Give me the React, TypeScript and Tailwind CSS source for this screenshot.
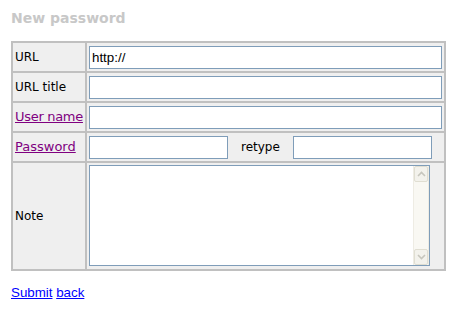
import React from 'react';

const verdana = "font-['DejaVu_Sans','Noto_Sans',sans-serif]";
const arial = "font-['Liberation_Sans',Arial,sans-serif]";

const inputCls =
  "h-[23px] border border-[#7f9db9] bg-white px-[2px] text-[13.33px] text-black outline-none font-['Liberation_Sans',Arial,sans-serif]";

function Chevron({ up }: { up?: boolean }) {
  return (
    <svg width="9" height="6" viewBox="0 0 9 6">
      <path
        d={up ? 'M1 5 L4.5 1.5 L8 5' : 'M1 1 L4.5 4.5 L8 1'}
        stroke="#c7c6bd"
        strokeWidth="1.6"
        fill="none"
      />
    </svg>
  );
}

function ScrollBar() {
  return (
    <div className="flex w-[16px] flex-col bg-[#f9f8f3] border-x border-[#eeece4]">
      <div className="flex h-[16px] items-center justify-center rounded-[2px] border border-[#e0ded2] bg-[#f3f2ec]">
        <Chevron up />
      </div>
      <div className="flex-1" />
      <div className="flex h-[16px] items-center justify-center rounded-[2px] border border-[#e0ded2] bg-[#f3f2ec]">
        <Chevron />
      </div>
    </div>
  );
}

export default function App() {
  return (
    <div className={`min-h-[322px] bg-white pl-[11px] pt-[10px] ${verdana}`}>
      <h1 className="text-[14px] font-bold leading-[16px] text-[#c8c8c8]">New password</h1>

      {/* form table */}
      <div className="mt-[15px] grid w-[435px] grid-cols-[72px_357px] grid-rows-[28px_28px_28px_28px_106px] gap-[2px] bg-[#c0c0c0] p-[2px] text-[12px] text-black">
        <div className="flex items-center bg-[#efefef] pl-[2px]">URL</div>
        <div className="flex items-center bg-[#efefef] px-[2px]">
          <input className={`${inputCls} w-full`} defaultValue="http://" />
        </div>

        <div className="flex items-center bg-[#efefef] pl-[2px]">URL title</div>
        <div className="flex items-center bg-[#efefef] px-[2px]">
          <input className={`${inputCls} w-full`} />
        </div>

        <div className="flex items-center whitespace-nowrap bg-[#efefef] pl-[2px]">
          <a href="#" className="text-[13px] tracking-[-0.3px] text-[#800080] underline">User name</a>
        </div>
        <div className="flex items-center bg-[#efefef] px-[2px]">
          <input className={`${inputCls} w-full`} />
        </div>

        <div className="flex items-center whitespace-nowrap bg-[#efefef] pl-[2px]">
          <a href="#" className="text-[13px] text-[#800080] underline">Password</a>
        </div>
        <div className="flex items-center bg-[#efefef] px-[2px]">
          <input type="password" className={`${inputCls} w-[139px]`} />
          <span className="mx-[13px]">retype</span>
          <input type="password" className={`${inputCls} w-[139px]`} />
        </div>

        <div className="flex items-center bg-[#efefef] pl-[2px]">Note</div>
        <div className="bg-[#efefef] px-[2px] pt-[2px]">
          <div className="flex h-[101px] w-[341px] border border-[#7f9db9] bg-white">
            <textarea className={`flex-1 resize-none p-[2px] text-[13.33px] outline-none ${arial}`} />
            <ScrollBar />
          </div>
        </div>
      </div>

      <div className={`mt-[14px] text-[13.33px] leading-[15px] ${arial}`}>
        <a href="#" className="text-[#0000ff] underline">Submit</a>{' '}
        <a href="#" className="text-[#0000ff] underline">back</a>
      </div>
    </div>
  );
}
